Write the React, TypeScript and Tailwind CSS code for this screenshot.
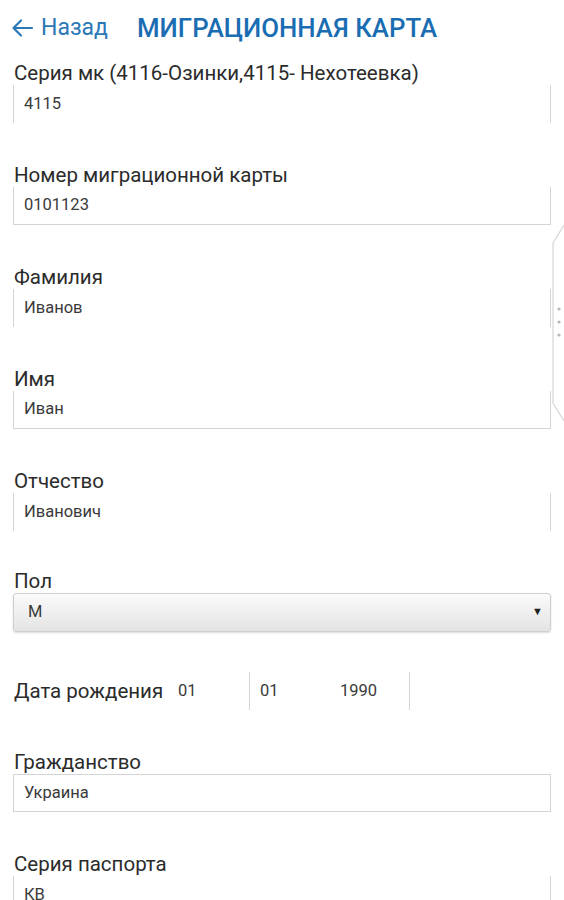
import type { ReactNode } from "react";

type FieldProps = {
  label: string;
  value: string;
  bottom?: boolean;
  top?: boolean;
  tight?: boolean;
};

function Label({ children }: { children: ReactNode }) {
  return (
    <div className="h-[22px] pl-[1px] text-[20.5px] leading-[22px] text-[#2b2b2b]">
      {children}
    </div>
  );
}

function Field({ label, value, bottom, top, tight }: FieldProps) {
  return (
    <div className={tight ? "mb-[39px]" : "mb-[41px]"}>
      <Label>{label}</Label>
      <div
        className={`mt-px flex h-[38px] items-center border-x border-[#d4d4d4] pl-[10px] text-[16.5px] text-[#3a3a3a] ${
          bottom ? "border-b" : ""
        } ${top ? "border-t" : ""}`}
      >
        {value}
      </div>
    </div>
  );
}

export default function App() {
  return (
    <div
      className="relative h-[900px] w-[564px] overflow-hidden bg-white"
      style={{ fontFamily: "Roboto, 'Noto Sans', sans-serif" }}
    >
      <header className="flex h-[60px] items-center pb-[4px] pl-[11px]">
        <div className="flex items-center text-[23px] text-[#2b78b7]">
          <svg width="24" height="22" viewBox="0 0 24 22" className="mr-[6px]">
            <path
              d="M21 11H3M10 3.5L2.5 11L10 18.5"
              fill="none"
              stroke="#2b78b7"
              strokeWidth="2.2"
              strokeLinecap="round"
              strokeLinejoin="round"
            />
          </svg>
          Назад
        </div>
        <h1 className="ml-[29px] text-[25.8px] font-medium text-[#1a6db2]">
          МИГРАЦИОННАЯ КАРТА
        </h1>
      </header>

      <div className="pl-[13px] pr-[13px] pt-[2px]">
        <Field label="Серия мк (4116-Озинки,4115- Нехотеевка)" value="4115" />
        <Field label="Номер миграционной карты" value="0101123" bottom />
        <Field label="Фамилия" value="Иванов" />
        <Field label="Имя" value="Иван" bottom />
        <Field label="Отчество" value="Иванович" tight />

        <div className="mb-[40px]">
          <Label>Пол</Label>
          <div className="mt-px flex h-[39px] items-center justify-between rounded-[3px] border border-[#cfcfcf] bg-gradient-to-b from-[#fafafa] to-[#e4e4e4] pl-[14px] pr-[7px] text-[16.5px] text-[#3a3a3a] shadow-[0_1px_2px_rgba(0,0,0,0.15)]">
            <span>М</span>
            <span className="text-[11px] text-[#222]">▼</span>
          </div>
        </div>

        <div className="mb-[41px] flex h-[38px] items-center text-[16.5px] text-[#3a3a3a]">
          <span className="w-[165px] pl-[1px] text-[20.5px] text-[#2b2b2b]">
            Дата рождения
          </span>
          <span className="w-[71px]">01</span>
          <div className="flex h-[38px] w-[161px] items-center border-x border-[#d4d4d4] pl-[10px]">
            <span className="w-[80px]">01</span>
            <span>1990</span>
          </div>
        </div>

        <Field label="Гражданство" value="Украина" top bottom />
        <Field label="Серия паспорта" value="КВ" />
      </div>

      <svg
        width="14"
        height="230"
        viewBox="0 0 14 230"
        className="absolute right-0 top-[215px]"
      >
        <path
          d="M14 10 L3 28 L3 188 L14 206"
          fill="none"
          stroke="#d6d6d6"
          strokeWidth="1.2"
        />
        <circle cx="9" cy="94" r="1.6" fill="#b8b8b8" />
        <circle cx="9" cy="107" r="1.6" fill="#b8b8b8" />
        <circle cx="9" cy="120" r="1.6" fill="#b8b8b8" />
      </svg>
    </div>
  );
}
